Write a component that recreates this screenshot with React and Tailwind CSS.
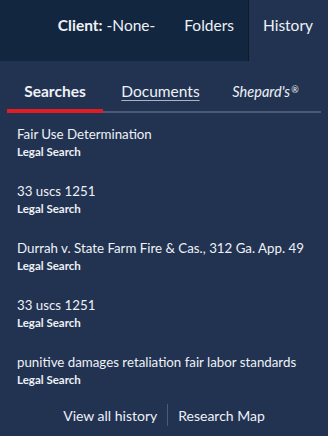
import React from 'react';

const history = [
  { title: 'Fair Use Determination', type: 'Legal Search' },
  { title: '33 uscs 1251', type: 'Legal Search' },
  { title: 'Durrah v. State Farm Fire & Cas., 312 Ga. App. 49', type: 'Legal Search' },
  { title: '33 uscs 1251', type: 'Legal Search' },
  { title: 'punitive damages retaliation fair labor standards', type: 'Legal Search' },
];

export default function App() {
  return (
    <div className="w-[328px] h-[436px] bg-[#223352] text-[#eef1f6] font-['Lato',sans-serif] overflow-hidden flex flex-col">
      {/* Top bar */}
      <div className="flex h-[61px] shrink-0">
        <div className="flex-1 bg-[#13263f] flex items-center justify-end text-[15.5px] border-r border-[#0d1a2c] pb-[9px]">
          <span className="mr-[29px]">
            <span className="font-bold">Client:</span> -None-
          </span>
          <span className="mr-[14px]">Folders</span>
        </div>
        <div className="w-[79px] flex items-center justify-center text-[15.5px] pb-[9px] pr-[1px]">
          History
        </div>
      </div>

      {/* Tabs */}
      <div className="mx-[7px] mt-[18px]">
        <div className="flex items-end h-[24px] text-[15.5px]">
          <div className="w-[96px] text-center font-bold">Searches</div>
          <div className="w-[115px] text-center underline underline-offset-[3px] decoration-[#aab4c4]">Documents</div>
          <div className="flex-1 text-center italic text-[14.5px] pr-[8px]">
            Shepard's<sup className="text-[9px] not-italic ml-[1px]">®</sup>
          </div>
        </div>
        <div className="mt-[6px] h-[4px] flex items-end">
          <div className="w-[96px] h-[4px] bg-[#e11c24]" />
          <div className="flex-1 h-[2px] bg-[#4a5b78]" />
        </div>
      </div>

      {/* History list */}
      <div className="px-[17px] pt-[12px] flex flex-col gap-[23px]">
        {history.map((item, i) => (
          <div key={i} className="flex flex-col">
            <div className="text-[13.3px] leading-[18px]">{item.title}</div>
            <div className="text-[11.5px] font-bold leading-[15px] mt-[1px]">{item.type}</div>
          </div>
        ))}
      </div>

      {/* Footer links */}
      <div className="mt-auto mb-[10px] flex items-center justify-center text-[14px]">
        <span className="pr-[10px]">View all history</span>
        <span className="w-px h-[22px] bg-[#4a5b78]" />
        <span className="pl-[10px]">Research Map</span>
      </div>
    </div>
  );
}
